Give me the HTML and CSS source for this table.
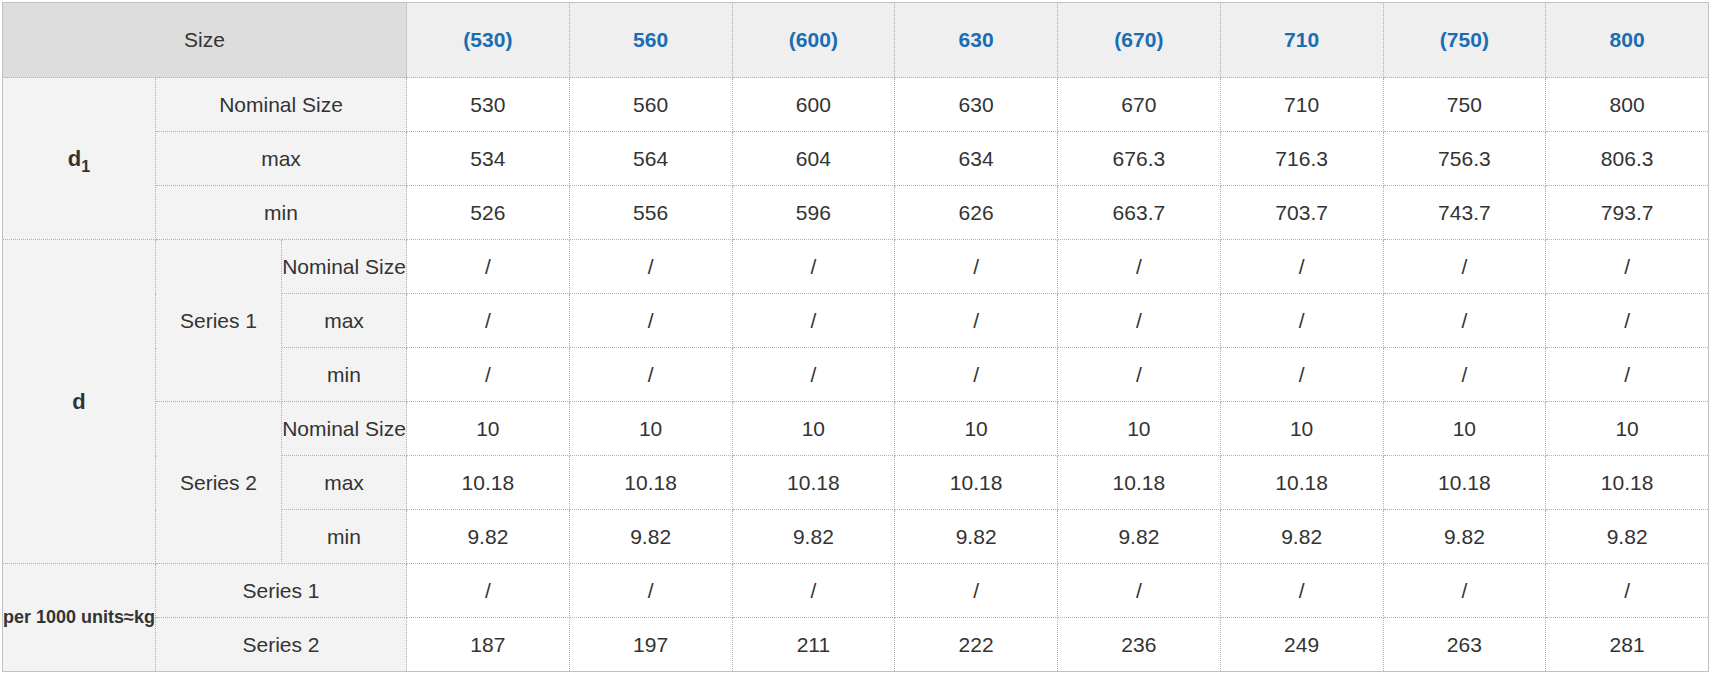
FILE: index.html
```html
<!DOCTYPE html>
<html>
<head>
<meta charset="utf-8">
<link rel="stylesheet" href="styles.css">
</head>
<body>
<div class="wrap">
<table class="spec">
<colgroup>
<col class="c-a"><col class="c-b"><col class="c-c">
<col class="c-v"><col class="c-v"><col class="c-v"><col class="c-v"><col class="c-v"><col class="c-v"><col class="c-v"><col class="c-v">
</colgroup>
<thead>
<tr class="head">
<th class="size" colspan="3">Size</th>
<th>(530)</th><th>560</th><th>(600)</th><th>630</th><th>(670)</th><th>710</th><th>(750)</th><th>800</th>
</tr>
</thead>
<tbody>
<tr>
<td class="lbl big" rowspan="3">d<sub>1</sub></td>
<td class="lbl" colspan="2">Nominal Size</td>
<td>530</td><td>560</td><td>600</td><td>630</td><td>670</td><td>710</td><td>750</td><td>800</td>
</tr>
<tr>
<td class="lbl" colspan="2">max</td>
<td>534</td><td>564</td><td>604</td><td>634</td><td>676.3</td><td>716.3</td><td>756.3</td><td>806.3</td>
</tr>
<tr>
<td class="lbl" colspan="2">min</td>
<td>526</td><td>556</td><td>596</td><td>626</td><td>663.7</td><td>703.7</td><td>743.7</td><td>793.7</td>
</tr>
<tr>
<td class="lbl big" rowspan="6">d</td>
<td class="lbl" rowspan="3">Series 1</td>
<td class="lbl">Nominal Size</td>
<td>/</td><td>/</td><td>/</td><td>/</td><td>/</td><td>/</td><td>/</td><td>/</td>
</tr>
<tr>
<td class="lbl">max</td>
<td>/</td><td>/</td><td>/</td><td>/</td><td>/</td><td>/</td><td>/</td><td>/</td>
</tr>
<tr>
<td class="lbl">min</td>
<td>/</td><td>/</td><td>/</td><td>/</td><td>/</td><td>/</td><td>/</td><td>/</td>
</tr>
<tr>
<td class="lbl" rowspan="3">Series 2</td>
<td class="lbl">Nominal Size</td>
<td>10</td><td>10</td><td>10</td><td>10</td><td>10</td><td>10</td><td>10</td><td>10</td>
</tr>
<tr>
<td class="lbl">max</td>
<td>10.18</td><td>10.18</td><td>10.18</td><td>10.18</td><td>10.18</td><td>10.18</td><td>10.18</td><td>10.18</td>
</tr>
<tr>
<td class="lbl">min</td>
<td>9.82</td><td>9.82</td><td>9.82</td><td>9.82</td><td>9.82</td><td>9.82</td><td>9.82</td><td>9.82</td>
</tr>
<tr>
<td class="lbl wt" rowspan="2">per 1000 units≈kg</td>
<td class="lbl" colspan="2">Series 1</td>
<td>/</td><td>/</td><td>/</td><td>/</td><td>/</td><td>/</td><td>/</td><td>/</td>
</tr>
<tr>
<td class="lbl" colspan="2">Series 2</td>
<td>187</td><td>197</td><td>211</td><td>222</td><td>236</td><td>249</td><td>263</td><td>281</td>
</tr>
</tbody>
</table>
</div>
</body>
</html>
```
FILE: styles.css
```css
html, body {
  margin: 0;
  padding: 0;
  background: #ffffff;
}
.wrap {
  padding: 2px 0 0 2px;
}
.spec {
  border-collapse: collapse;
  table-layout: fixed;
  width: 1706px;
  border: 1px solid #c2c2c2;
  font-family: "Liberation Sans", Arial, sans-serif;
  font-size: 21px;
  color: #333333;
}
.c-a { width: 153px; }
.c-b { width: 126px; }
.c-c { width: 125px; }
.c-v { width: 162.75px; }
.spec th, .spec td {
  border: 1px dotted #b0b0b0;
  padding: 0;
  text-align: center;
  vertical-align: middle;
  white-space: nowrap;
}
.spec tbody tr {
  height: 54px;
}
.head {
  height: 75px;
}
.head th {
  background: #efefef;
  color: #1a6db3;
  font-weight: bold;
}
.head th.size {
  background: #dddddd;
  color: #333333;
  font-weight: normal;
}
.lbl {
  background: #f3f3f3;
}
.big {
  font-weight: bold;
  font-size: 22px;
}
.big sub {
  font-size: 16px;
  vertical-align: -6px;
  line-height: 0;
}
.wt {
  font-weight: bold;
  font-size: 18px;
}
```
